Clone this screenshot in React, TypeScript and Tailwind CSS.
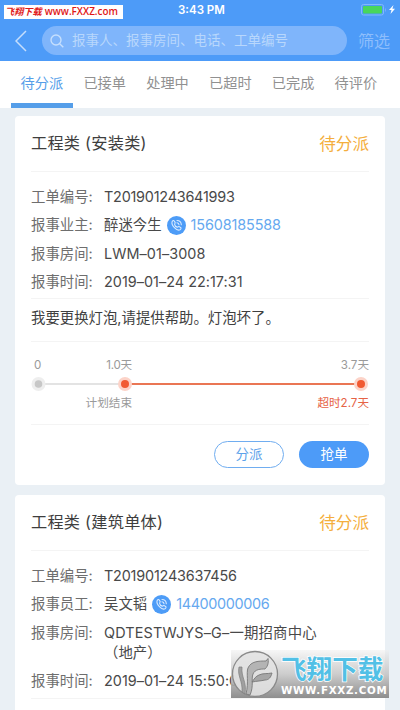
import type { ReactNode } from "react";

const sans = "font-['Inter','Noto_Sans_CJK_SC',sans-serif]";

function PhoneIcon() {
  return (
    <svg className="mx-[5px] h-[19px] w-[19px] shrink-0" viewBox="0 0 19 19" fill="none">
      <circle cx="9.5" cy="9.5" r="9.5" fill="#4d9cf7" />
      <path
        d="M5.2 5.4c.8-1.1 1.6-1.2 2.2-.2l.7 1.2c.4.7-.6 1.2-.5 1.9.2 1.1 1.6 2.5 2.7 2.8.8.2 1.2-.9 1.9-.5l1.4.9c1 .7.2 1.600-.6 2.200-3 1.800-9.300-4.400-7.800-8.300Z"
        stroke="#d8eaff"
        strokeWidth="1.100"
      />
      <path d="M10 6.800c1.100.1 1.900.9 2 2M10 4.500c2.400.1 4.200 1.900 4.300 4.200" stroke="#d8eaff" strokeWidth="1.100" strokeLinecap="round" />
    </svg>
  );
}

function StatusBar() {
  return (
    <div className="flex h-5 items-center">
      <div className="mt-[5px] ml-1 flex h-[14px] w-[119px] items-center self-start bg-white pl-px font-['Open_Sans','Noto_Sans_CJK_SC',sans-serif] text-[9.200px] leading-none font-semibold whitespace-nowrap text-[#df1717]">
        <span className="italic">飞翔下载</span>
        <span className="ml-[3px] text-[9.900px]">www.FXXZ.com</span>
      </div>
      <span className="ml-[55px] w-[50px] text-[11.500px] leading-5 font-semibold whitespace-nowrap text-white">3:43 PM</span>
      <svg className="ml-auto mr-[3px] h-3 w-9" viewBox="0 0 36 12">
        <rect x=".5" y=".5" width="22" height="10.500" rx="2" fill="#4d9bf8" stroke="#82b9fb" />
        <rect x="2" y="2" width="19" height="7.500" rx="1" fill="#48d65c" />
        <path d="M24 4v4c1-.5 1-3.500 0-4Z" fill="#82b9fb" />
        <path d="M32.500 1 28 6h2.500L29.500 10l4.500-5.300h-2.600Z" fill="#fff" />
      </svg>
    </div>
  );
}

function SearchBar() {
  return (
    <div className="flex h-[41px] items-center">
      <svg className="ml-[15px] h-[22px] w-3" viewBox="0 0 12 22" fill="none" stroke="#c5defc" strokeWidth="1.500">
        <path d="M11 1 1 11l10 10" />
      </svg>
      <div className="ml-[15px] flex h-[29px] w-[305px] items-center rounded-full bg-[#7fb5fb] text-[#b8d7fc]">
        <svg className="ml-2 h-[14px] w-[14px]" viewBox="0 0 14 14" fill="none" stroke="#c6dffd" strokeWidth="1.400">
          <circle cx="6" cy="6" r="5" />
          <path d="m9.700 9.700 3.600 3.600" />
        </svg>
        <span className="ml-2 text-[13.500px] leading-none whitespace-nowrap">报事人、报事房间、电话、工单编号</span>
      </div>
      <span className="ml-[11px] text-[16px] leading-none whitespace-nowrap text-[#8dbefc]">筛选</span>
    </div>
  );
}

const tabs = ["待分派", "已接单", "处理中", "已超时", "已完成", "待评价"];

function Tabs() {
  return (
    <nav className="flex h-[47px] bg-white pl-[10.500px]">
      {tabs.map((tab, i) => (
        <div
          key={tab}
          className={`flex h-full w-[62.800px] shrink-0 items-center justify-center border-b-[5px] pt-[2px] text-[14.200px] leading-none whitespace-nowrap ${
            i === 0 ? "border-[#559ee9] text-[#559ee9]" : "border-transparent text-[#919191]"
          }`}
        >
          {tab}
        </div>
      ))}
    </nav>
  );
}

function Row({ label, children }: { label: string; children: ReactNode }) {
  return (
    <div className="flex min-h-[28.300px] text-[14.400px] leading-[28.300px] whitespace-nowrap">
      <span className="w-[73px] shrink-0 text-[#6e6e6e]">{label}:</span>
      <div className="flex items-center text-[#494949]">{children}</div>
    </div>
  );
}

function CardHeader({ title }: { title: string }) {
  return (
    <div className="flex h-[56px] items-center justify-between border-b border-[#f4f4f4] whitespace-nowrap">
      <h2 className="text-[16.200px] tracking-[0.250px] text-[#3e3e3e]">{title}</h2>
      <span className="pt-[2px] text-[16.600px] text-[#f4ae3d]">待分派</span>
    </div>
  );
}

function Timeline() {
  return (
    <div className="flex h-[83px] flex-col border-b border-[#f4f4f4] pt-[15px] text-[11.600px] leading-[17px] text-[#9a9a9a]">
      <div className="flex h-[17px] pl-[3px]">
        <span className="w-[50px]">0</span>
        <span className="w-[48px] text-right tracking-[-0.200px]">1.0天</span>
        <span className="ml-auto">3.7天</span>
      </div>
      <svg className="h-5 w-[338px] shrink-0" viewBox="0 0 338 20">
        <path d="M7.500 10H94" stroke="#e3e3e3" strokeWidth="2" />
        <path d="M94 10h236" stroke="#ea7654" strokeWidth="2" />
        <circle cx="7.500" cy="10" r="7" fill="#eeeeee" />
        <circle cx="7.500" cy="10" r="3.800" fill="#c7c7c7" />
        <circle cx="94" cy="10" r="7" fill="#fcd3c8" />
        <circle cx="94" cy="10" r="4" fill="#f15a32" />
        <circle cx="330" cy="10" r="7" fill="#fcd3c8" />
        <circle cx="330" cy="10" r="4" fill="#f15a32" />
      </svg>
      <div className="flex h-[17px] pt-px">
        <span className="w-[101px] text-right">计划结束</span>
        <span className="ml-auto text-[#e66245]">超时2.7天</span>
      </div>
    </div>
  );
}

function Watermark() {
  return (
    <div className="absolute top-[650px] left-[231px] flex h-[48px] w-[158px] items-center bg-linear-to-b from-[#eeeeee]/50 via-[#c4c4c4]/85 to-[#8e8e8e]">
      <svg className="h-[48px] w-[48px] shrink-0" viewBox="0 0 48 48">
        <circle cx="24" cy="24" r="22.500" fill="#e2e2e2" fillOpacity=".9" stroke="#8a8a8a" strokeWidth="1.300" />
        <path d="M37 8.500 35 11c-7 0-15 0-18 7-2 5 1 14-2 26l4 1c4-9 1-16 3-21 2-5 8-5 12-5 2-2 4-5 3-10.500Z" fill="#b4b4b4" stroke="#777" strokeWidth=".9" />
        <path d="M41 23c-5 1-9 0-13 2-3 1-5 4-7 7 5-1 9-1 13-2 4 0 6-3 7-7Z" fill="#a6a6a6" stroke="#777" strokeWidth=".9" />
        <path d="M8 17c-2 9 4 14 3 25l3 2c2-13-4-16-3-27Z" fill="#a0a0a0" stroke="#7c7c7c" strokeWidth=".7" />
      </svg>
      <div className="ml-[2px] flex h-full flex-col whitespace-nowrap">
        <span className="mt-[3px] h-[29px] font-['Noto_Sans_CJK_SC',sans-serif] text-[25.600px] leading-[29px] font-bold text-[#52c0e6] [-webkit-text-stroke:1.500px_white] [paint-order:stroke_fill]">
          飞翔下载
        </span>
        <span className="mt-[2px] h-[12px] font-['DejaVu_Sans',sans-serif] text-[10.300px] leading-[12px] font-bold tracking-[0.700px] text-white">
          WWW.FXXZ.COM
        </span>
      </div>
    </div>
  );
}

export default function App() {
  return (
    <div className={`relative h-[710px] w-[400px] overflow-hidden bg-[#eaf0f5] ${sans}`}>
      <header className="h-[61px] bg-[#4d9bf8]">
        <StatusBar />
        <SearchBar />
      </header>
      <Tabs />
      <main className="flex flex-col gap-[10px] px-[15px] pt-[8px]">
        <article className="h-[369px] shrink-0 rounded-[4px] bg-white px-4">
          <CardHeader title="工程类 (安装类)" />
          <div className="h-[127px] border-b border-[#f4f4f4] pt-[11px]">
            <Row label="工单编号">
              <span className="tracking-[-0.220px]">T201901243641993</span>
            </Row>
            <Row label="报事业主">
              醉迷今生
              <PhoneIcon />
              <span className="tracking-[-0.120px] text-[#65a8ef]">15608185588</span>
            </Row>
            <Row label="报事房间">
              <span className="tracking-[0.080px]">LWM–01–3008</span>
            </Row>
            <Row label="报事时间">
              <span className="tracking-[0.030px]">2019–01–24 22:17:31</span>
            </Row>
          </div>
          <p className="h-[43px] border-b border-[#f4f4f4] text-[14.400px] leading-[38px] whitespace-nowrap text-[#3f3f3f]">
            我要更换灯泡,请提供帮助。灯泡坏了。
          </p>
          <Timeline />
          <div className="flex justify-end gap-[15px] pt-[16px]">
            <button className="h-[27px] w-[70px] rounded-full border border-[#70adf0] pt-px text-[13.500px] leading-none text-[#5ca2ea]">分派</button>
            <button className="h-[27px] w-[70px] rounded-full bg-[#4d9bf8] pt-px text-[13.500px] leading-none text-white">抢单</button>
          </div>
        </article>
        <article className="h-[230px] shrink-0 rounded-[4px] bg-white px-4">
          <CardHeader title="工程类 (建筑单体)" />
          <div className="h-[148px] border-b border-[#f4f4f4] pt-[11px]">
            <Row label="工单编号">
              <span className="tracking-[-0.180px]">T201901243637456</span>
            </Row>
            <Row label="报事员工">
              吴文韬
              <PhoneIcon />
              <span className="tracking-[-0.350px] text-[#65a8ef]">14400000006</span>
            </Row>
            <Row label="报事房间">
              <div>
                <div className="tracking-[0.180px]">QDTESTWJYS–G–一期招商中心</div>
                <div className="-mt-[4px] h-[24px] leading-5">（地产）</div>
              </div>
            </Row>
            <Row label="报事时间">
              <span className="tracking-[0.030px]">2019–01–24 15:50:00</span>
            </Row>
          </div>
        </article>
      </main>
      <Watermark />
    </div>
  );
}
